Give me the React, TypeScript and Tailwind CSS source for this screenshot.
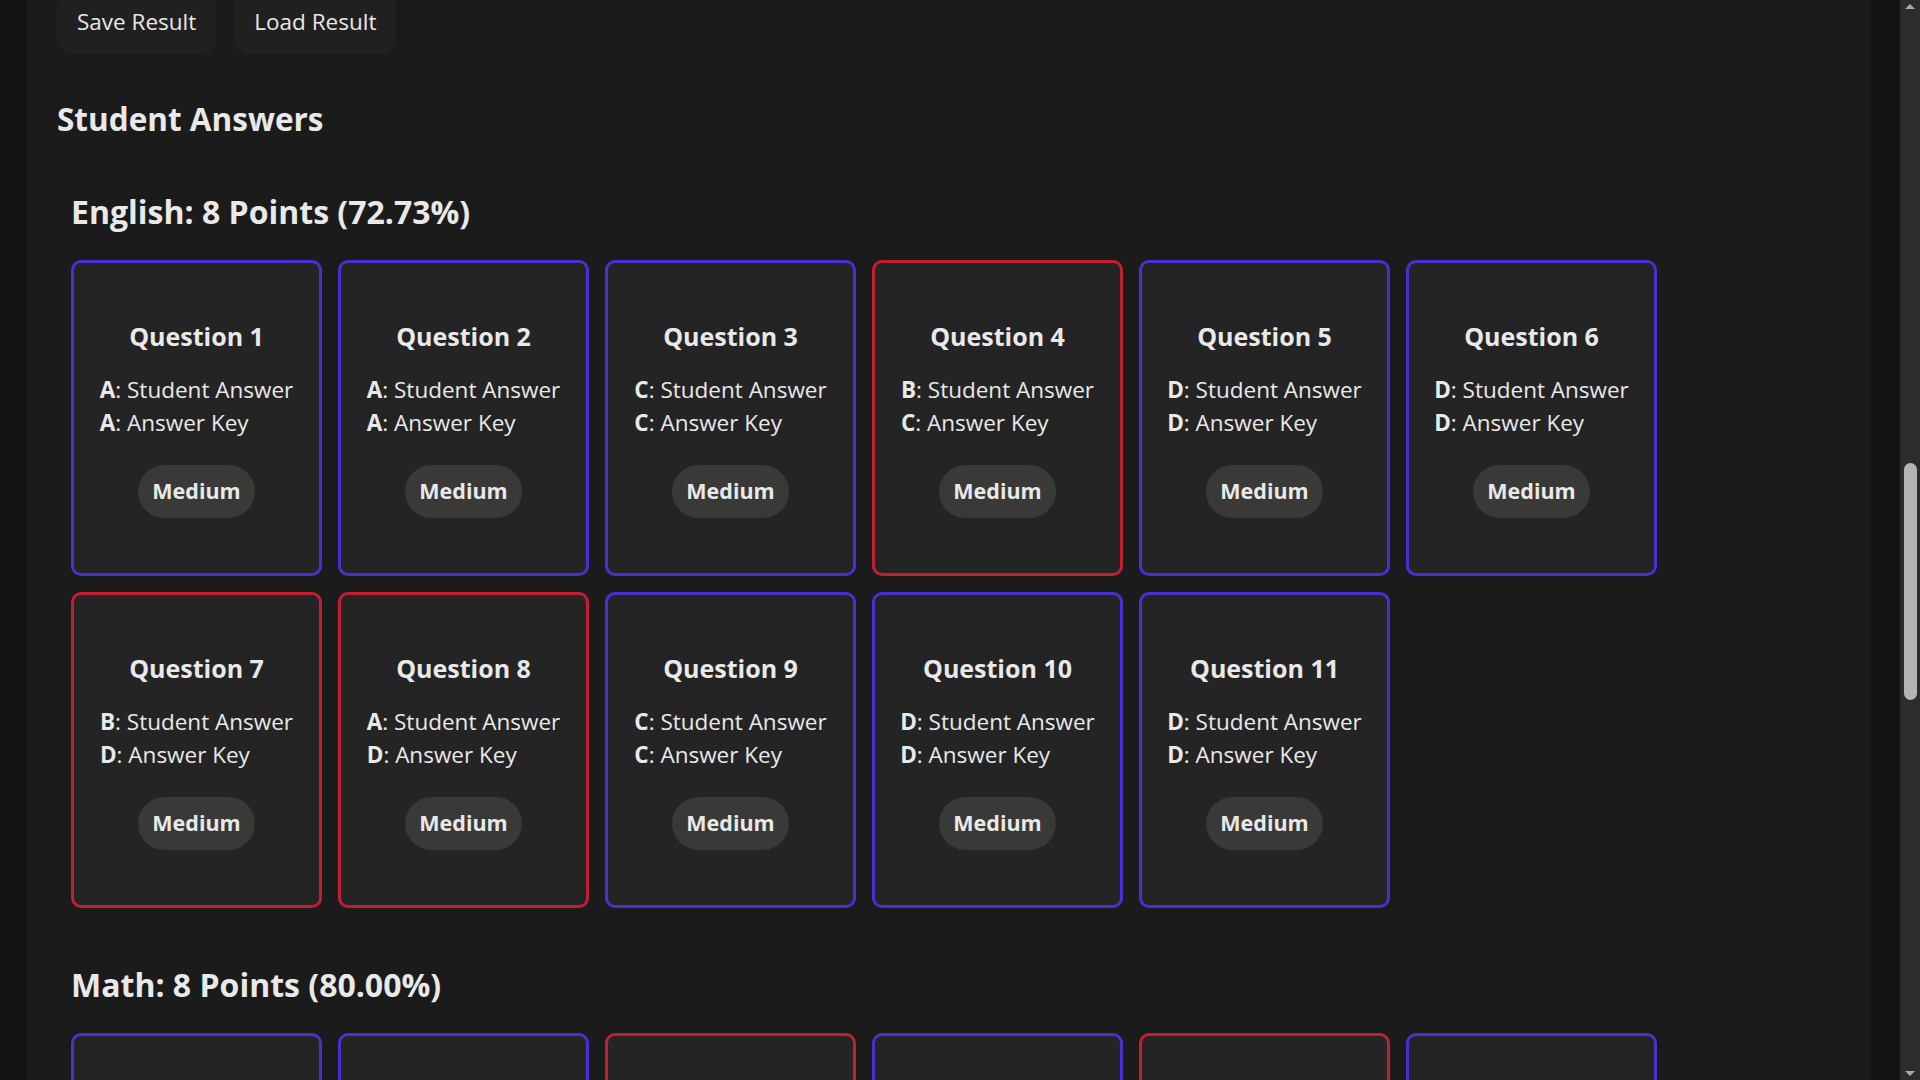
import React from 'react';

type Question = {
  n: number;
  student: string;
  key: string;
};

const english: Question[] = [
  { n: 1, student: 'A', key: 'A' },
  { n: 2, student: 'A', key: 'A' },
  { n: 3, student: 'C', key: 'C' },
  { n: 4, student: 'B', key: 'C' },
  { n: 5, student: 'D', key: 'D' },
  { n: 6, student: 'D', key: 'D' },
  { n: 7, student: 'B', key: 'D' },
  { n: 8, student: 'A', key: 'D' },
  { n: 9, student: 'C', key: 'C' },
  { n: 10, student: 'D', key: 'D' },
  { n: 11, student: 'D', key: 'D' },
];

const math: Question[] = [
  { n: 1, student: 'B', key: 'B' },
  { n: 2, student: 'C', key: 'C' },
  { n: 3, student: 'A', key: 'D' },
  { n: 4, student: 'D', key: 'D' },
  { n: 5, student: 'B', key: 'A' },
  { n: 6, student: 'C', key: 'C' },
  { n: 7, student: 'A', key: 'A' },
  { n: 8, student: 'D', key: 'D' },
  { n: 9, student: 'B', key: 'B' },
  { n: 10, student: 'C', key: 'C' },
];

const QuestionCard: React.FC<{ q: Question }> = ({ q }) => {
  const correct = q.student === q.key;
  return (
    <div
      className={
        'h-[316px] w-[251px] rounded-[10px] border-[3px] bg-[#242424] flex flex-col items-center justify-center ' +
        (correct ? 'border-[#4a30d0]' : 'border-[#c21f32]')
      }
    >
      <h4 className="text-[25px] leading-[34px] font-bold">Question {q.n}</h4>
      <div className="mt-[20px] text-[22.5px] leading-[33px]">
        <p>
          <span className="font-bold">{q.student}</span>: Student Answer
        </p>
        <p>
          <span className="font-bold">{q.key}</span>: Answer Key
        </p>
      </div>
      <span className="mt-[26px] h-[53px] px-[14px] flex items-center rounded-full bg-[#393937] text-[21.5px] font-bold">
        Medium
      </span>
    </div>
  );
};

const Subject: React.FC<{ title: string; questions: Question[] }> = ({ title, questions }) => (
  <section className="pl-[14px]">
    <h3 className="text-[32px] leading-[48px] font-bold">{title}</h3>
    <div className="mt-[24px] grid grid-cols-[repeat(6,251px)] gap-4">
      {questions.map((q) => (
        <QuestionCard key={q.n} q={q} />
      ))}
    </div>
  </section>
);

const Scrollbar: React.FC = () => (
  <div className="w-[20px] h-full bg-[#2c2c2c] flex flex-col items-center">
    <div className="mt-[4px] w-0 h-0 border-x-[5px] border-x-transparent border-b-[5px] border-b-[#a8a8a8]" />
    <div className="mt-[454px] w-[13px] h-[237px] rounded-full bg-[#b4b4b4]" />
    <div className="mt-auto mb-[4px] w-0 h-0 border-x-[5px] border-x-transparent border-t-[5px] border-t-[#a8a8a8]" />
  </div>
);

export default function App() {
  return (
    <div className="h-screen w-full overflow-hidden flex bg-[#141414] text-[#e9e9e9] font-['Open_Sans',sans-serif]">
      <div className="flex-1 min-w-0 pl-[27px] pr-[30px]">
        <main className="h-full bg-[#1b1b1b] pl-[30px] overflow-hidden">
          <div className="-mt-[9px] flex gap-[18px]">
            <button className="px-[20px] pt-[14px] pb-[16px] rounded-[14px] bg-[#202020] text-[22.5px] leading-[33px]">
              Save Result
            </button>
            <button className="px-[20px] pt-[14px] pb-[16px] rounded-[14px] bg-[#202020] text-[22.5px] leading-[33px]">
              Load Result
            </button>
          </div>
          <h2 className="mt-[41px] text-[31.5px] leading-[47px] font-bold">Student Answers</h2>
          <div className="mt-[46px] flex flex-col gap-[53px]">
            <Subject title="English: 8 Points (72.73%)" questions={english} />
            <Subject title="Math: 8 Points (80.00%)" questions={math} />
          </div>
        </main>
      </div>
      <Scrollbar />
    </div>
  );
}
